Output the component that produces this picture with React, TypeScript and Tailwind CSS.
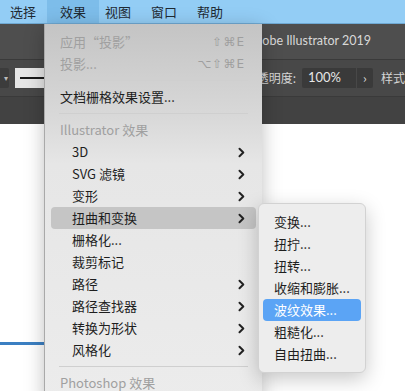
import { ReactNode } from 'react'

type Item = {
  label: string
  kind?: 'item' | 'disabled' | 'header' | 'sep'
  shortcut?: string
  sub?: boolean
  indent?: boolean
  active?: boolean
}

const menuItems: Item[] = [
  { label: '应用“投影”', kind: 'disabled', shortcut: '⇧⌘E' },
  { label: '投影...', kind: 'disabled', shortcut: '⌥⇧⌘E' },
  { label: '', kind: 'sep' },
  { label: '文档栅格效果设置...' },
  { label: '', kind: 'sep' },
  { label: 'Illustrator 效果', kind: 'header' },
  { label: '3D', indent: true, sub: true },
  { label: 'SVG 滤镜', indent: true, sub: true },
  { label: '变形', indent: true, sub: true },
  { label: '扭曲和变换', indent: true, sub: true, active: true },
  { label: '栅格化...', indent: true },
  { label: '裁剪标记', indent: true },
  { label: '路径', indent: true, sub: true },
  { label: '路径查找器', indent: true, sub: true },
  { label: '转换为形状', indent: true, sub: true },
  { label: '风格化', indent: true, sub: true },
  { label: '', kind: 'sep' },
  { label: 'Photoshop 效果', kind: 'header' }
]

const subItems = [
  '变换...',
  '扭拧...',
  '扭转...',
  '收缩和膨胀...',
  '波纹效果...',
  '粗糙化...',
  '自由扭曲...'
]

const Chevron = () => (
  <svg width="7" height="11" viewBox="0 0 7 11" className="shrink-0">
    <path
      d="M1.5 1.8 L5.3 5.5 L1.5 9.2"
      fill="none"
      stroke="#222"
      strokeWidth="2"
      strokeLinecap="round"
      strokeLinejoin="round"
    />
  </svg>
)

const MenuRow = ({ item }: { item: Item }) => {
  if (item.kind === 'sep') {
    return <div className="mx-[14px] my-[5px] h-px bg-[#cfcfcf]" />
  }
  const gray = item.kind === 'disabled' || item.kind === 'header'
  return (
    <div
      className={`mx-[6px] flex h-[22px] items-center rounded-[4px] pr-[11px] ${
        item.indent ? 'pl-[21px]' : 'pl-[9px]'
      } ${item.active ? 'bg-[#c5c5c5]' : ''} ${
        gray ? 'text-[#a0a0a0]' : 'text-[#1e1e1e]'
      }`}
    >
      <span className="flex-1">{item.label}</span>
      {item.shortcut ? (
        <span className="font-['DejaVu_Sans',sans-serif] text-[12px] tracking-[1px] text-[#9e9e9e]">
          {item.shortcut}
        </span>
      ) : null}
      {item.sub ? <Chevron /> : null}
    </div>
  )
}

const TopItem = ({ children, active }: { children: ReactNode; active?: boolean }) => (
  <div
    className={`flex h-full items-center px-[13px] ${active ? 'bg-[#7dbdea]' : ''}`}
  >
    {children}
  </div>
)

export default function App() {
  return (
    <div className="relative h-[391px] w-[405px] overflow-hidden bg-white font-['Noto_Sans_CJK_SC',sans-serif] text-[13px]">
      <div className="flex h-full flex-col">
        {/* menu bar */}
        <div className="flex h-[24px] shrink-0 items-center border-b border-[#6fa9d3] bg-[#93cdf5] text-[13px] text-[#1f2a33]">
          <div className="flex h-full items-center pl-[10px] pr-[21px]">选择</div>
          <div className="-ml-[10px] flex h-full">
            <TopItem active>效果</TopItem>
          </div>
          <div className="flex h-full items-center gap-[20px] pl-[6px]">
            <span>视图</span>
            <span>窗口</span>
            <span>帮助</span>
          </div>
        </div>

        {/* title bar */}
        <div className="flex h-[36px] shrink-0 items-center border-b border-[#3a3a3a] bg-[#4e4e4e] pl-[247px] font-['Lato',sans-serif] text-[12.5px] text-[#d8d8d8]">
          Adobe Illustrator 2019
        </div>

        {/* control bar */}
        <div className="flex h-[36px] shrink-0 items-center bg-[#484848] text-[12px] text-[#d6d6d6]">
          <div className="flex h-[20px] w-[9px] items-center justify-end rounded-r-[2px] bg-[#3c3c3c] pr-[1px] text-[8px] text-[#bbb]">
            ▾
          </div>
          <div className="ml-[6px] flex h-[20px] w-[32px] items-center bg-[#e6e6e6] pl-[5px]">
            <div className="h-[2px] w-[27px] bg-[#1a1a1a]" />
          </div>
          <div className="ml-[198px] whitespace-nowrap">不透明度:</div>
          <div className="ml-[6px] flex h-[20px] w-[56px] items-center rounded-l-[2px] bg-[#3a3a3a] pl-[6px] font-['Lato',sans-serif] text-[13px] text-[#e6e6e6]">
            100%
          </div>
          <div className="ml-px flex h-[20px] w-[17px] items-center justify-center rounded-r-[2px] bg-[#3a3a3a] text-[12px] text-[#ddd]">
            ›
          </div>
          <div className="ml-[8px] whitespace-nowrap">样式</div>
        </div>

        {/* panel strip */}
        <div className="h-[28px] shrink-0 border-t border-[#3a3a3a] bg-[#424242]" />

        {/* canvas */}
        <div className="flex flex-1 flex-col bg-white">
          <div className="mt-[218px] h-[3px] w-[44px] bg-[#3b7fc2]" />
        </div>
      </div>

      {/* effect menu */}
      <div className="absolute left-[44px] top-[24px] h-[380px] w-[218px] border-l border-[#a9a9a9] bg-[linear-gradient(to_bottom,#c4c4c4,#d9d9d9_95px,#e6e6e6_140px,#ececec)] pt-[7px] shadow-[0_4px_18px_rgba(0,0,0,0.25)]">
        {menuItems.map((item, i) => (
          <MenuRow key={i} item={item} />
        ))}
      </div>

      {/* distort submenu */}
      <div className="absolute left-[258px] top-[203px] w-[108px] rounded-[6px] border border-[#d2d2d2] bg-[#ededed] py-[7px] shadow-[0_6px_20px_rgba(0,0,0,0.22)]">
        {subItems.map(label => (
          <div
            key={label}
            className={`mx-[4px] flex h-[22px] items-center rounded-[4px] pl-[11px] ${
              label === '波纹效果...' ? 'bg-[#5ba4f5] text-white' : 'text-[#1e1e1e]'
            }`}
          >
            {label}
          </div>
        ))}
      </div>
    </div>
  )
}
